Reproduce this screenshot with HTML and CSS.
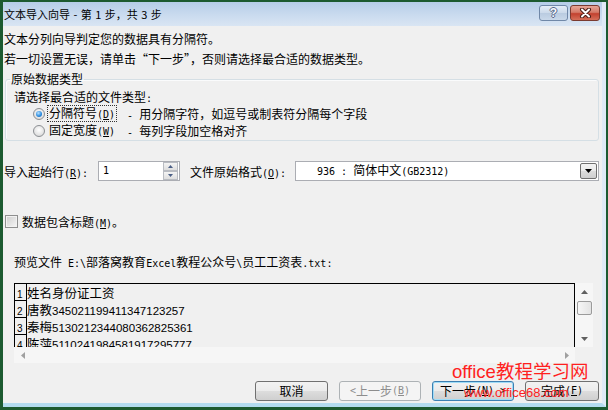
FILE: index.html
```html
<!DOCTYPE html>
<html lang="zh-CN">
<head>
<meta charset="utf-8">
<title>文本导入向导</title>
<link rel="stylesheet" href="styles.css">
</head>
<body>
<div class="desk">
  <div class="win">
    <div class="titlebar">
      <span class="title">文本导入向导 - 第 1 步，共 3 步</span>
      <div class="caps">
        <span class="cap help">?</span>
        <span class="cap close"><svg width="13" height="10" viewBox="0 0 13 10"><path d="M3 1.5 L10 8.5 M10 1.5 L3 8.5" stroke="#4a1c16" stroke-width="4" stroke-linecap="round"/><path d="M3 1.5 L10 8.5 M10 1.5 L3 8.5" stroke="#ffffff" stroke-width="2" stroke-linecap="round"/></svg></span>
      </div>
    </div>
    <div class="client">
      <p class="line">文本分列向导判定您的数据具有分隔符。</p>
      <p class="line">若一切设置无误，请单击“下一步”，否则请选择最合适的数据类型。</p>
      <fieldset class="group">
        <legend>原始数据类型</legend>
        <div class="gline">请选择最合适的文件类型<span class="hw">:</span></div>
        <div class="opt"><span class="radio on"></span><span class="olabel focus">分隔符号<span class="hw">(<u>D</u>)</span></span><span class="desc"><span class="hw">- </span>用分隔字符，如逗号或制表符分隔每个字段</span></div>
        <div class="opt"><span class="radio"></span><span class="olabel">固定宽度<span class="hw">(<u>W</u>)</span></span><span class="desc"><span class="hw">- </span>每列字段加空格对齐</span></div>
      </fieldset>
      <div class="startrow">
        <span class="lbl1">导入起始行<span class="hw">(<u>R</u>):</span></span>
        <div class="spin">
          <span class="val">1</span>
          <span class="spinbtns">
            <span class="sb"><svg width="5" height="3" viewBox="0 0 5 3"><path d="M0 3 L2.5 0 L5 3Z" fill="#4b5f86"/></svg></span>
            <span class="sb"><svg width="5" height="3" viewBox="0 0 5 3"><path d="M0 0 L2.5 3 L5 0Z" fill="#4b5f86"/></svg></span>
          </span>
        </div>
        <span class="lbl2">文件原始格式<span class="hw">(<u>O</u>):</span></span>
        <div class="combo">
          <span class="cval"><span class="hw">936 : </span>简体中文<span class="hw">(GB2312)</span></span>
          <span class="cbtn"><svg width="7" height="4" viewBox="0 0 7 4"><path d="M0 0 L7 0 L3.5 4Z" fill="#000"/></svg></span>
        </div>
      </div>
      <div class="chkrow"><span class="chk"></span><span>数据包含标题<span class="hw">(<u>M</u>)</span>。</span></div>
      <div class="pvlabel">预览文件<span class="hw"> E:\</span>部落窝教育<span class="hw">Excel</span>教程公众号<span class="hw">\</span>员工工资表<span class="hw">.txt:</span></div>
      <div class="preview">
        <div class="pv-main">
          <div class="pv-row"><span class="num">1</span><span class="txt">姓名身份证工资</span></div>
          <div class="pv-row"><span class="num">2</span><span class="txt">唐教<span class="dig">345021199411347123257</span></span></div>
          <div class="pv-row"><span class="num">3</span><span class="txt">秦梅<span class="dig">5130212344080362825361</span></span></div>
          <div class="pv-row"><span class="num">4</span><span class="txt">陈萍<span class="dig">5110241984581917295777</span></span></div>
        </div>
        <div class="vscroll">
          <span class="arr"><svg width="7" height="4" viewBox="0 0 7 4"><path d="M0 4 L3.5 0 L7 4Z" fill="#606060"/></svg></span>
          <span class="thumb"></span>
          <span class="vspace"></span>
          <span class="arr"><svg width="7" height="4" viewBox="0 0 7 4"><path d="M0 0 L3.5 4 L7 0Z" fill="#606060"/></svg></span>
        </div>
        <div class="hscroll">
          <span class="harr"><svg width="4" height="7" viewBox="0 0 4 7"><path d="M4 0 L0 3.5 L4 7Z" fill="#a0a0a0"/></svg></span>
          <span class="harr"><svg width="4" height="7" viewBox="0 0 4 7"><path d="M0 0 L4 3.5 L0 7Z" fill="#a0a0a0"/></svg></span>
        </div>
        <div class="corner"></div>
      </div>
      <div class="btnrow">
        <span class="btn b-cancel">取消</span>
        <span class="btn b-prev disabled"><span class="hw">&lt; </span>上一步<span class="hw">(<u>B</u>)</span></span>
        <span class="btn b-next focused">下一步<span class="hw">(<u>N</u>) &gt;</span></span>
        <span class="btn b-finish">完成<span class="hw">(<u>F</u>)</span></span>
      </div>
    </div>
  </div>
  <div class="wm1">office教程学习网</div>
  <div class="wm2">www.office68.com</div>
</div>
</body>
</html>
```

FILE: styles.css
```css
* { box-sizing: border-box; }
html, body { margin: 0; padding: 0; }
body {
  width: 608px;
  height: 410px;
  overflow: hidden;
  font-family: "Noto Sans CJK SC", "Liberation Sans", sans-serif;
  font-size: 12px;
  color: #000;
}
.hw { font-family: "DejaVu Sans Mono", "Liberation Mono", monospace; font-size: 10px; }
u { text-decoration: underline; text-underline-offset: 1px; }

.desk {
  position: relative;
  width: 608px;
  height: 410px;
  padding: 2px 2px 3px 3px;
  background: #1c5a30;
  display: flex;
}
.win {
  flex: 1;
  display: flex;
  flex-direction: column;
  border-right: 4px solid #dfeaf6;
  border-bottom: 4px solid #b3dbef;
}
.titlebar {
  height: 24px;
  flex: none;
  display: flex;
  justify-content: space-between;
  padding-left: 1px;
  padding-right: 2px;
  background: linear-gradient(#b6cde8, #cadbef 55%, #d9e5f3);
}
.title { font-size: 11px; line-height: 24px; word-spacing: 1px; }
.caps { display: flex; gap: 2px; margin-top: 3px; }
.cap {
  height: 16px;
  border-radius: 3px;
  display: flex;
  align-items: center;
  justify-content: center;
}
.help {
  width: 29px;
  border: 1px solid #7088a8;
  background: linear-gradient(#e4edf7, #cbd9ea 50%, #b9cbe0 51%, #c9d8ea);
  color: #f5f8fc;
  font-family: "Liberation Sans", sans-serif;
  font-weight: bold;
  font-size: 12px;
  line-height: 14px;
  text-shadow: 1px 0 #56688a, -1px 0 #56688a, 0 1px #56688a, 0 -1px #56688a;
}
.close {
  width: 30px;
  border: 1px solid #7a3a30;
  background: linear-gradient(#e6a597, #d47a68 45%, #c2412f 55%, #d5705a);
}

.client {
  flex: 1;
  background: #f0f0f0;
  padding: 3px 0 0 1px;
  display: flex;
  flex-direction: column;
}
.line { margin: 0; line-height: 20px; white-space: nowrap; }

.group {
  margin: 1px 3px 0 1px;
  padding: 0 0 1px 8px;
  border: 1px solid #d5dfe5;
  border-radius: 3px;
  box-shadow: inset 1px 1px 0 #fafbfc;
  min-width: 0;
}
.group legend { padding: 0 1px; margin-left: -4px; line-height: 18px; }
.gline { height: 17px; line-height: 17px; }
.opt {
  height: 17px;
  display: flex;
  align-items: center;
  padding-left: 19px;
  white-space: nowrap;
}
.radio {
  width: 12px;
  height: 12px;
  border-radius: 50%;
  border: 1px solid #8c8f93;
  background: radial-gradient(circle at 50% 40%, #ffffff, #e4e4e4 60%, #cfcfcf);
  margin-right: 2px;
  display: flex;
  align-items: center;
  justify-content: center;
}
.radio.on::after {
  content: "";
  width: 6px;
  height: 6px;
  border-radius: 50%;
  background: radial-gradient(circle at 40% 35%, #b8e2ff, #2f8ee0 55%, #0c5aa8);
}
.olabel { border: 1px solid transparent; padding: 0 1px; line-height: 13px; }
.olabel.focus { border: 1px dotted #333; }
.desc { margin-left: 10px; }

.startrow {
  display: flex;
  align-items: center;
  height: 20px;
  margin-top: 20px;
  white-space: nowrap;
}
.lbl1 { width: 94px; flex: none; }
.spin {
  width: 82px;
  height: 20px;
  flex: none;
  border: 1px solid #abadb3;
  background: #fff;
  display: flex;
  justify-content: space-between;
  padding: 0 1px 0 4px;
}
.val { font-family: "DejaVu Sans Mono", monospace; font-size: 10px; line-height: 18px; }
.spinbtns { width: 15px; display: flex; flex-direction: column; }
.sb {
  flex: 1;
  border: 1px solid #b9bcc2;
  background: linear-gradient(#f4f4f4, #dedede);
  display: flex;
  align-items: center;
  justify-content: center;
}
.lbl2 { margin-left: 10px; width: 105px; flex: none; }
.combo {
  flex: 1;
  margin-right: 3px;
  height: 20px;
  border: 1px solid #abadb3;
  background: #fff;
  display: flex;
  align-items: center;
  justify-content: space-between;
  padding: 0 1px 0 21px;
}
.cval { line-height: 16px; }
.cbtn {
  width: 17px;
  height: 16px;
  border: 1px solid #707070;
  border-radius: 2px;
  background: linear-gradient(#f3f3f3, #ebebeb 50%, #dddddd 51%, #cfcfcf);
  display: flex;
  align-items: center;
  justify-content: center;
}

.chkrow {
  display: flex;
  align-items: center;
  height: 16px;
  margin-top: 32px;
  padding-left: 1px;
}
.chk {
  width: 13px;
  height: 13px;
  border: 1px solid #8e8f8f;
  background: linear-gradient(135deg, #cdcdcd, #f7f7f7);
  box-shadow: inset 0 0 0 1px #f2f2f2;
  margin-right: 4px;
}

.pvlabel {
  margin-top: 25px;
  line-height: 16px;
  padding-left: 10px;
  white-space: nowrap;
}

.preview {
  margin: 11px 0 0 10px;
  width: 579px;
  display: grid;
  grid-template-columns: 561px 18px;
  grid-template-rows: 64px 16px;
}
.pv-main {
  border: 1px solid #000;
  border-bottom: none;
  overflow: hidden;
  background: #f0f0f0;
}
.pv-row { display: flex; height: 17px; white-space: nowrap; }
.num {
  width: 12px;
  flex: none;
  border-right: 1px solid #000;
  border-bottom: 1px solid #000;
  font-family: "Liberation Sans", sans-serif;
  font-size: 10px;
  line-height: 10px;
  padding: 6px 0 0 2px;
}
.txt { line-height: 17px; font-size: 12.5px; }
.dig { font-family: "Liberation Sans", sans-serif; font-size: 11.5px; }

.vscroll {
  background: #f6f6f6;
  display: flex;
  flex-direction: column;
  align-items: center;
}
.arr { height: 17px; width: 17px; display: flex; align-items: center; justify-content: center; flex: none; }
.thumb {
  width: 15px;
  height: 14px;
  margin-top: 1px;
  border: 1px solid #9b9b9b;
  border-radius: 2px;
  background: linear-gradient(90deg, #f6f6f6, #e3e3e3);
  flex: none;
}
.vspace { flex: 1; }
.hscroll {
  background: #f6f6f6;
  display: flex;
  justify-content: space-between;
  align-items: center;
}
.harr { width: 17px; height: 16px; display: flex; align-items: center; justify-content: center; }
.corner { background: #f0f0f0; }

.btnrow {
  display: flex;
  justify-content: flex-end;
  gap: 11px;
  margin-top: 18px;
  margin-right: 3px;
}
.btn {
  height: 20px;
  border: 1px solid #707070;
  border-radius: 3px;
  background: linear-gradient(#f2f2f2, #ebebeb 50%, #dddddd 51%, #cfcfcf);
  display: flex;
  align-items: center;
  justify-content: center;
  line-height: 16px;
  white-space: nowrap;
}
.b-cancel { width: 73px; }
.b-prev { width: 82px; }
.b-next { width: 82px; }
.b-finish { width: 74px; }
.btn.disabled {
  border-color: #adb2b5;
  background: #f4f4f4;
  color: #8d8d8d;
}
.btn.focused {
  border-color: #3c7fb1;
  box-shadow: inset 0 0 0 1px #9fdcf7;
}

.wm1 {
  position: absolute;
  left: 452px;
  top: 363px;
  font-family: "Liberation Sans", "Noto Sans CJK SC", sans-serif;
  font-size: 18.5px;
  line-height: 18.5px;
  color: #ff1f1f;
  white-space: nowrap;
}
.wm2 {
  position: absolute;
  left: 464px;
  top: 386px;
  font-family: "Liberation Sans", sans-serif;
  font-size: 13px;
  line-height: 13px;
  color: #ff1f1f;
  white-space: nowrap;
}
```
